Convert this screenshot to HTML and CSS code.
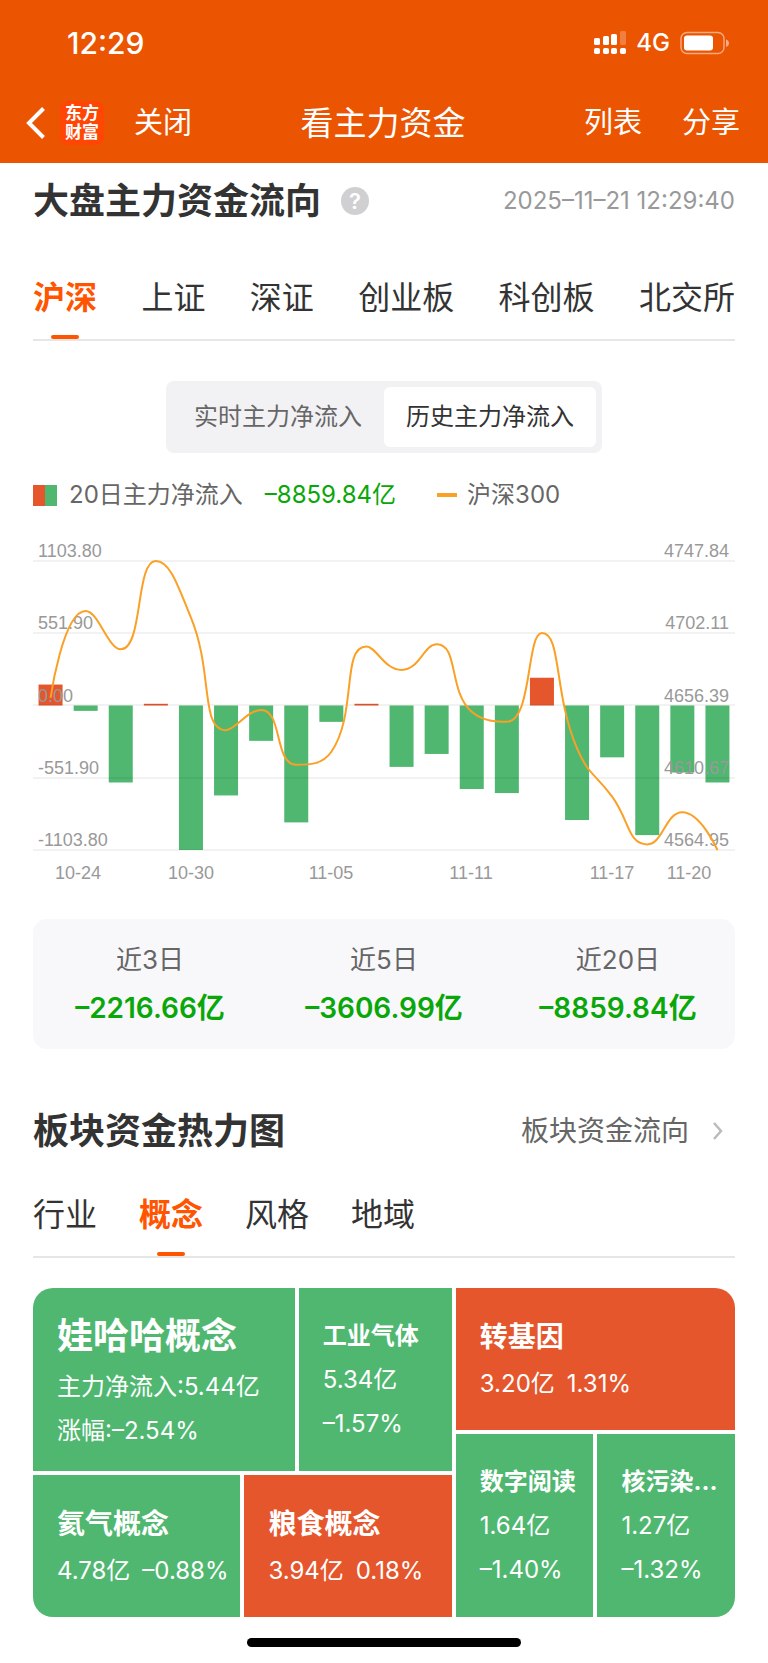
FILE: index.html
```html
<!DOCTYPE html>
<html lang="zh-CN">

<head>
  <meta charset="UTF-8">
  <meta name="viewport" content="width=device-width, initial-scale=1.0">
  <title>看主力资金</title>
  <link rel="stylesheet" href="styles.css">
</head>

<body>
  <header class="header">
    <div class="status">
      <span class="time">12:29</span>
      <div class="status-icons">
        <svg class="signal" width="32" height="24" viewBox="0 0 32 24" fill="#fff" aria-hidden="true">
          <rect x="0" y="7" width="6" height="7" rx="1.5" />
          <rect x="9" y="5" width="6" height="9" rx="1.5" />
          <rect x="17" y="3" width="6" height="11" rx="1.5" />
          <rect x="26" y="0" width="6" height="14" rx="1.5" opacity=".25" />
          <rect x="0" y="17" width="6" height="6" rx="1.8" />
          <rect x="9" y="17" width="6" height="6" rx="1.8" />
          <rect x="17" y="17" width="6" height="6" rx="1.8" />
          <rect x="26" y="17" width="6" height="6" rx="1.8" />
        </svg>
        <span class="network">4G</span>
        <svg class="battery" width="50" height="24" viewBox="0 0 50 24" aria-hidden="true">
          <rect x="1" y="1.5" width="43" height="21" rx="6" fill="none" stroke="#fff" stroke-width="1.4" opacity=".5" />
          <rect x="4" y="4.5" width="29" height="15" rx="3" fill="#fff" />
          <path d="M46 8.500q3 1 3 3.700t-3 3.700z" fill="#fff" opacity=".5" />
        </svg>
      </div>
    </div>
    <nav class="nav">
      <div class="nav-left">
        <button class="back" aria-label="返回">
          <svg width="20" height="32" viewBox="0 0 20 32" fill="none" stroke="#fff" stroke-width="4" aria-hidden="true">
            <path d="M17.500 1.500L3 16l14.500 14.500" />
          </svg>
        </button>
        <span class="logo">东方<br>财富</span>
        <button class="close">关闭</button>
      </div>
      <h1>看主力资金</h1>
      <div class="nav-right">
        <button>列表</button>
        <button>分享</button>
      </div>
    </nav>
  </header>

  <main>
    <section>
      <div class="section-head">
        <h2>大盘主力资金流向</h2>
        <button class="help" aria-label="说明">?</button>
        <time>2025–11–21 12:29:40</time>
      </div>

      <div class="tabs tabs-market">
        <button class="active">沪深</button>
        <button>上证</button>
        <button>深证</button>
        <button>创业板</button>
        <button>科创板</button>
        <button>北交所</button>
      </div>

      <div class="switch">
        <button>实时主力净流入</button>
        <button class="active">历史主力净流入</button>
      </div>

      <div class="legend">
        <i class="legend-bar"></i>
        <span>20日主力净流入</span>
        <span class="legend-value">–8859.84亿</span>
        <i class="legend-line"></i>
        <span>沪深300</span>
      </div>

      <svg class="chart" viewBox="0 0 702 360" role="img" aria-label="20日主力净流入与沪深300">
        <g id="bars"></g>
        <g class="grid">
          <path d="M0 32H702M0 104H702M0 176H702M0 249H702M0 321H702" />
        </g>
        <g class="axis">
          <text x="5" y="28">1103.80</text>
          <text x="5" y="100">551.90</text>
          <text x="5" y="173">0.00</text>
          <text x="5" y="245">-551.90</text>
          <text x="5" y="317">-1103.80</text>
        </g>
        <g class="axis axis-right">
          <text x="696" y="28">4747.84</text>
          <text x="696" y="100">4702.11</text>
          <text x="696" y="173">4656.39</text>
          <text x="696" y="245">4610.67</text>
          <text x="696" y="317">4564.95</text>
        </g>
        <g class="axis axis-date">
          <text x="45" y="350">10-24</text>
          <text x="158" y="350">10-30</text>
          <text x="298" y="350">11-05</text>
          <text x="438" y="350">11-11</text>
          <text x="579" y="350">11-17</text>
          <text x="656" y="350">11-20</text>
        </g>
        <path id="line" />
      </svg>

      <dl class="summary">
        <div>
          <dt>近3日</dt>
          <dd>–2216.66亿</dd>
        </div>
        <div>
          <dt>近5日</dt>
          <dd>–3606.99亿</dd>
        </div>
        <div>
          <dt>近20日</dt>
          <dd>–8859.84亿</dd>
        </div>
      </dl>
    </section>

    <section class="heat">
      <div class="section-head">
        <h2>板块资金热力图</h2>
        <a href="#" class="more">板块资金流向
          <svg width="10" height="18" viewBox="0 0 10 18" fill="none" stroke="#bbb" stroke-width="2.500" aria-hidden="true">
            <path d="M1 1l7 8-7 8" />
          </svg>
        </a>
      </div>

      <div class="tabs tabs-sector">
        <button>行业</button>
        <button class="active">概念</button>
        <button>风格</button>
        <button>地域</button>
      </div>

      <div class="heatmap">
        <div class="heat-left">
          <div class="heat-row tall">
            <div class="tile first">
              <h3>娃哈哈概念</h3>
              <p>主力净流入:5.44亿</p>
              <p>涨幅:–2.54%</p>
            </div>
            <div class="tile small">
              <h3>工业气体</h3>
              <p>5.34亿</p>
              <p>–1.57%</p>
            </div>
          </div>
          <div class="heat-row">
            <div class="tile">
              <h3>氦气概念</h3>
              <p><span>4.78亿</span><span>–0.88%</span></p>
            </div>
            <div class="tile up">
              <h3>粮食概念</h3>
              <p><span>3.94亿</span><span>0.18%</span></p>
            </div>
          </div>
        </div>
        <div class="heat-right">
          <div class="heat-row">
            <div class="tile up">
              <h3>转基因</h3>
              <p><span>3.20亿</span><span>1.31%</span></p>
            </div>
          </div>
          <div class="heat-row tall">
            <div class="tile small">
              <h3>数字阅读</h3>
              <p>1.64亿</p>
              <p>–1.40%</p>
            </div>
            <div class="tile small">
              <h3>核污染…</h3>
              <p>1.27亿</p>
              <p>–1.32%</p>
            </div>
          </div>
        </div>
      </div>
    </section>
  </main>

  <div class="home-bar"></div>

  <script src="chart.js"></script>
</body>

</html>
```

FILE: styles.css
```css
* {
  box-sizing: border-box;
}

body {
  background: #fff;
  color: #333;
  font-family: Inter, "Noto Sans CJK SC", sans-serif;
  font-size: 24px;
  margin: 0;
}

h1,
h2,
h3,
p,
dl,
dd {
  margin: 0;
}

button {
  background: none;
  border: none;
  color: inherit;
  font: inherit;
  padding: 0;
  white-space: nowrap;
}

.header {
  background: #eb5502;
  color: #fff;
}

.status {
  align-items: center;
  display: flex;
  height: 83px;
  justify-content: space-between;
  padding: 2px 38px 0 67px;
}

.time {
  font-size: 30px;
  font-weight: 500;
}

.status-icons {
  align-items: center;
  display: flex;
  gap: 10px;
}

.network {
  font-weight: 500;
}

.nav {
  align-items: center;
  display: grid;
  font-size: 29px;
  grid-template-columns: 1fr auto 1fr;
  height: 80px;
  line-height: 48px;
  padding: 0 28px 0 26px;

  h1 {
    font-size: 33px;
    font-weight: 400;
  }
}

.nav-left {
  align-items: center;
  display: flex;
}

.nav-right {
  display: flex;
  gap: 40px;
  justify-content: flex-end;
}

.back svg {
  display: block;
}

.logo {
  background: #ff4604;
  border-radius: 8px;
  font-size: 17px;
  font-weight: 700;
  height: 44px;
  line-height: 19px;
  margin: 0 30px 0 14px;
  padding-top: 3px;
  text-align: center;
  width: 44px;
}

main {
  padding: 0 33px;
}

.section-head {
  align-items: center;
  display: flex;
  height: 76px;
  line-height: 48px;

  h2 {
    font-size: 36px;
    font-weight: 700;
    white-space: nowrap;
  }

  time {
    color: #999;
    margin-left: auto;
  }
}

.help {
  background: #d0d0d2;
  border-radius: 50%;
  color: #fff;
  font-size: 22px;
  font-weight: 600;
  height: 28px;
  line-height: 28px;
  margin-left: 20px;
  width: 28px;
}

.more {
  align-items: center;
  color: #666;
  display: flex;
  font-size: 28px;
  gap: 24px;
  margin-left: auto;
  padding-right: 12px;
  text-decoration: none;
}

.tabs {
  border-bottom: 2px solid #e6e6e6;
  display: flex;
  font-size: 32px;

  button {
    line-height: 48px;
    padding-bottom: 17px;
    position: relative;
  }

  .active {
    color: #ff5400;
    font-weight: 700;

    &::after {
      background: #ff5400;
      border-radius: 2px;
      bottom: 0;
      content: "";
      height: 4px;
      left: calc(50% - 14px);
      position: absolute;
      width: 28px;
    }
  }
}

.tabs-market {
  justify-content: space-between;
  margin-top: 35px;
}

.tabs-sector {
  gap: 42px;
  margin-top: 22px;
}

.switch {
  background: #f2f2f5;
  border-radius: 8px;
  color: #666;
  display: flex;
  margin: 40px auto 0;
  padding: 6px;
  width: fit-content;

  button {
    border-radius: 6px;
    line-height: 60px;
    padding: 0 22px;
  }

  .active {
    background: #fff;
    color: #333;
  }
}

.legend {
  align-items: center;
  color: #666;
  display: flex;
  line-height: 36px;
  margin-top: 24px;
}

.legend-bar {
  background: linear-gradient(90deg, #e5562d 50%, #50b771 50%);
  height: 21px;
  margin-right: 12px;
  width: 24px;
}

.legend-value {
  color: #09a709;
  margin-left: 22px;
}

.legend-line {
  background: #fba026;
  height: 4px;
  margin: 0 10px 0 41px;
  width: 20px;
}

.chart {
  display: block;
  margin-top: 16px;
  width: 100%;

  .up {
    fill: #e5562d;
  }

  .down {
    fill: #50b771;
  }
}

.grid {
  stroke: #000;
  stroke-opacity: 0.05;
  stroke-width: 2;
}

.axis {
  fill: #999;
  font-family: "Liberation Sans", Arial, sans-serif;
  font-size: 18px;
}

.axis-right {
  text-anchor: end;
}

.axis-date {
  text-anchor: middle;
}

#line {
  fill: none;
  stroke: #fba026;
  stroke-width: 2;
}

.summary {
  background: #f8f8fb;
  border-radius: 14px;
  display: flex;
  line-height: 48px;
  margin-top: 30px;
  padding: 17px 0;
  text-align: center;

  div {
    flex: 1;
  }

  dt {
    color: #666;
    font-size: 26px;
  }

  dd {
    color: #09a709;
    font-size: 28px;
    font-weight: 600;
  }
}

.heat {
  margin-top: 44px;
}

.heatmap {
  border-radius: 20px;
  color: #fff;
  display: flex;
  gap: 4px;
  margin-top: 30px;
  overflow: hidden;
}

.heat-left,
.heat-right {
  display: flex;
  flex-direction: column;
  gap: 4px;
  min-width: 0;
}

.heat-left {
  flex: 3;
}

.heat-right {
  flex: 2;
}

.heat-row {
  display: flex;
  gap: 4px;
  min-height: 142px;

  &.tall {
    min-height: 183px;
  }
}

.tile {
  background: #50b771;
  display: flex;
  flex: 1;
  flex-direction: column;
  justify-content: center;
  line-height: 44px;
  min-width: 0;
  padding-left: 24px;
  white-space: nowrap;

  h3 {
    font-size: 28px;
    font-weight: 700;
    line-height: 50px;
  }

  p {
    display: flex;
    gap: 12px;
  }

  &.up {
    background: #e5562d;
  }

  &.small h3 {
    font-size: 24px;
    line-height: 44px;
  }

  &.first {
    flex: 0 0 62.5%;

    h3 {
      font-size: 36px;
      line-height: 58px;
    }
  }
}

.home-bar {
  background: #000;
  border-radius: 5px;
  height: 9px;
  margin: 21px auto 16px;
  width: 274px;
}
```

FILE: chart.js
```js
const flows = [160, -41, -588, 13, -1103.8, -687, -270, -893, -125, 13, -469, -370, -638, -669, 212, -875, -396, -990, -512, -588];
const index = [4661.2, 4716.2, 4692, 4747.84, 4712, 4640.8, 4653.6, 4618.9, 4627.1, 4693.7, 4678.9, 4695.1, 4652.4, 4646.1, 4702.3, 4629.2, 4598.7, 4568.5, 4588.8, 4564.95];

const WIDTH = 702;
const TOP = 32;
const BOTTOM = 321;
const BAR = 24;
const step = WIDTH / flows.length;
const zero = (TOP + BOTTOM) / 2;

const bars = document.getElementById("bars");
flows.forEach((value, i) => {
  const height = Math.abs(value) / 1103.8 * (BOTTOM - TOP) / 2;
  const rect = document.createElementNS("http://www.w3.org/2000/svg", "rect");
  rect.setAttribute("x", step * (i + 0.5) - BAR / 2);
  rect.setAttribute("y", value > 0 ? zero - height : zero);
  rect.setAttribute("width", BAR);
  rect.setAttribute("height", height);
  rect.setAttribute("class", value > 0 ? "up" : "down");
  bars.appendChild(rect);
});

const points = index.map((value, i) => [
  step * (i + 0.5),
  TOP + (4747.84 - value) / (4747.84 - 4564.95) * (BOTTOM - TOP)
]);

const clamp = (v, a, b) => Math.max(Math.min(a, b), Math.min(Math.max(a, b), v));
const dist = (a, b) => Math.hypot(a[0] - b[0], a[1] - b[1]);

// smooth curve, control points never leave the box of their segment
function smoothPath(pts) {
  let d = `M${pts[0]}`;
  let out = pts[0];
  for (let i = 1; i < pts.length; i++) {
    const prev = pts[i - 1];
    const cur = pts[i];
    const next = pts[i + 1];
    if (!next) {
      d += `C${out} ${cur} ${cur}`;
      break;
    }
    const a = dist(prev, cur);
    const b = dist(cur, next);
    const ratio = b / (a + b);
    const nextOut = [0, 1].map(k => clamp(cur[k] + (next[k] - prev[k]) * 0.5 * ratio, cur[k], next[k]));
    const cp = [0, 1].map(k => clamp(cur[k] - (nextOut[k] - cur[k]) * a / b, prev[k], cur[k]));
    d += `C${out} ${cp} ${cur}`;
    out = [0, 1].map(k => cur[k] + (cur[k] - cp[k]) * b / a);
  }
  return d;
}

document.getElementById("line").setAttribute("d", smoothPath(points));
```
